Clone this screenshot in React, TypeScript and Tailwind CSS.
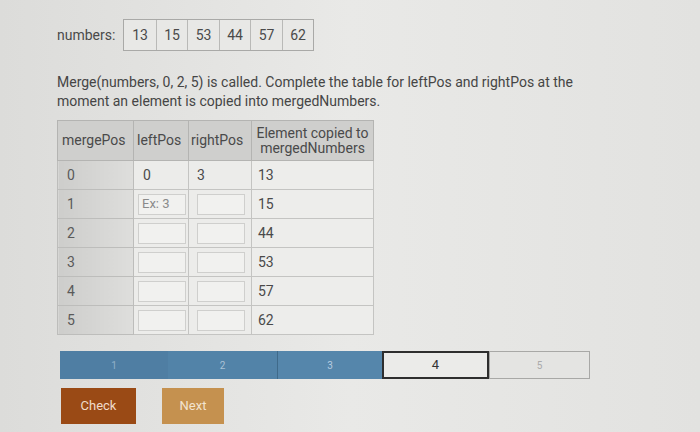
import React from 'react';

const numbers = [13, 15, 53, 44, 57, 62];

const rows = [
  { pos: 0, left: '0', right: '3', el: 13 },
  { pos: 1, left: null, right: null, el: 15, hint: 'Ex: 3' },
  { pos: 2, left: null, right: null, el: 44 },
  { pos: 3, left: null, right: null, el: 53 },
  { pos: 4, left: null, right: null, el: 57 },
  { pos: 5, left: null, right: null, el: 62 },
];

function Box({ hint }: { hint?: string }) {
  return (
    <div className="flex h-[21px] w-[48px] items-center border border-[#cfcfcd] bg-[#f1f1ef] px-[3px] text-[13px] text-[#8a8a8a]">
      {hint}
    </div>
  );
}

export default function App() {
  return (
    <div
      className="h-[432px] w-[700px] overflow-hidden bg-gradient-to-r from-[#dcdcda] via-[#e9e9e7] to-[#e2e2e0] text-[#4a4a4a]"
      style={{ fontFamily: 'Roboto, "Liberation Sans", sans-serif' }}
    >
      <div className="flex flex-col pl-[57px] pt-[19px]">
        {/* array */}
        <div className="flex items-center gap-[8px] text-[14px]">
          <span>numbers:</span>
          <div className="flex h-[32px] border border-[#a9a9a7] bg-[#e8e8e6]">
            {numbers.map((n, i) => (
              <div
                key={i}
                className={`flex w-[31.5px] items-center justify-center ${i > 0 ? 'border-l border-[#b9b9b7]' : ''}`}
              >
                {n}
              </div>
            ))}
          </div>
        </div>

        <p className="mt-[22px] w-[540px] text-[14px] leading-[19px] text-[#454545]">
          Merge(numbers, 0, 2, 5) is called. Complete the table for leftPos and rightPos at the moment an element
          is copied into mergedNumbers.
        </p>

        <table className="mt-[9px] w-[316px] table-fixed border-collapse border border-[#a8a8a6] text-[14px] text-[#4a4a4a]">
          <colgroup>
            <col className="w-[76px]" />
            <col className="w-[55px]" />
            <col className="w-[63px]" />
            <col className="w-[122px]" />
          </colgroup>
          <thead>
            <tr className="h-[40px] bg-[#cfcfcd]">
              <th className="whitespace-nowrap border border-[#b4b4b2] px-[4px] text-left font-normal">mergePos</th>
              <th className="whitespace-nowrap border border-[#b4b4b2] px-[3px] text-left font-normal">leftPos</th>
              <th className="whitespace-nowrap border border-[#b4b4b2] px-[2px] text-left font-normal">rightPos</th>
              <th className="whitespace-nowrap border border-[#b4b4b2] px-0 text-center text-[14px] font-normal leading-[15px]">
                Element copied to
                <br />
                mergedNumbers
              </th>
            </tr>
          </thead>
          <tbody>
            {rows.map((r) => (
              <tr key={r.pos} className="h-[29px]">
                <td className="border border-[#bdbdbb] bg-gradient-to-r from-[#cdcdcb] to-[#dededc] px-[9px] text-[#5a5a5a]">
                  {r.pos}
                </td>
                <td className="border border-[#c4c4c2] bg-[#ececea] px-[4px]">
                  {r.left !== null ? <span className="pl-[5px]">{r.left}</span> : <Box hint={r.hint} />}
                </td>
                <td className="border border-[#c4c4c2] bg-[#ececea] px-[8px]">
                  {r.right !== null ? <span>{r.right}</span> : <Box />}
                </td>
                <td className="border border-[#c4c4c2] bg-[#ededeb] px-[6px]">{r.el}</td>
              </tr>
            ))}
          </tbody>
        </table>
      </div>

      {/* progress */}
      <div className="ml-[60px] mt-[16px] flex h-[28px] w-[530px] text-[10px]">
        <div className="flex w-[108px] items-center justify-center bg-[#4f7ea3] text-[#8fb0c8]">1</div>
        <div className="flex w-[109px] items-center justify-center bg-[#5283a8] text-[#a9c2d6]">2</div>
        <div className="flex w-[105px] items-center justify-center border-l border-[#3f6a8a] bg-[#5586ab] text-[#b5cce0]">
          3
        </div>
        <div className="flex w-[107px] items-center justify-center border-2 border-[#2e2e2e] bg-[#ebebe9] text-[13px] text-[#333]">
          4
        </div>
        <div className="flex w-[101px] items-center justify-center border border-[#a8a8a6] bg-[#e4e4e2] text-[#aaa]">
          5
        </div>
      </div>

      <div className="ml-[61px] mt-[9px] flex gap-[26px] text-[13px] text-[#f0dccb]">
        <button className="h-[36px] w-[75px] bg-[#9a4a15]">Check</button>
        <button className="h-[36px] w-[62px] bg-[#c5914f] text-[#f3e4cf]">Next</button>
      </div>
    </div>
  );
}
